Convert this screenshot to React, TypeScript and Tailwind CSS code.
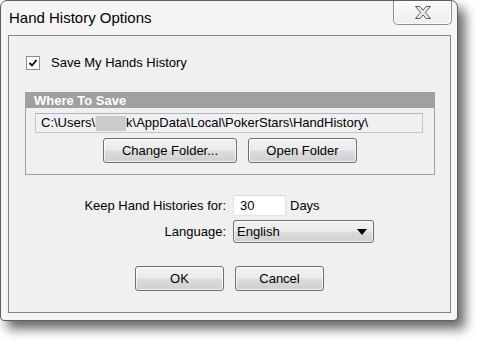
import React from "react";

const btn =
  "h-[25px] border border-[#707070] rounded-[3px] bg-[linear-gradient(#f2f2f2_0%,#ebebeb_49%,#dddddd_51%,#cfcfcf_100%)] shadow-[inset_0_0_0_1px_rgba(255,255,255,0.7)] text-[13px] text-black flex items-center justify-center";

export default function App() {
  return (
    <div
      className="w-[482px] h-[345px] bg-white"
      style={{ fontFamily: '"Liberation Sans", Arial, sans-serif' }}
    >
      <div className="w-[458px] h-[321px] bg-[#f5f5f5] border border-[#5e5e5e] rounded-t-[7px] rounded-b-[4px] shadow-[7px_8px_12px_rgba(0,0,0,0.6)] flex flex-col">
        {/* Title bar */}
        <div className="h-[34px] flex items-start justify-between pl-[8px] pr-[5px]">
          <span className="mt-[8px] text-[15px] leading-[18px] text-black">
            Hand History Options
          </span>
          <div className="w-[59px] h-[24px] border border-t-0 border-[#8e8e8e] rounded-b-[5px] bg-[linear-gradient(#fbfbfb,#eeeeee)] shadow-[inset_0_0_0_1px_rgba(255,255,255,0.9)] flex items-center justify-center">
            <svg width="18" height="15" viewBox="0 0 18 15">
              <path
                d="M1.5 1.5 H6 L9 5.2 L12 1.5 H16.5 L11.3 7.5 L16.5 13.5 H12 L9 9.8 L6 13.5 H1.5 L6.7 7.5 Z"
                fill="#eeeeee"
                stroke="#555a66"
                strokeWidth="1"
                strokeLinejoin="round"
              />
            </svg>
          </div>
        </div>

        {/* Client area */}
        <div className="ml-[7px] mr-[6px] mb-[7px] flex-1 border border-[#848484] bg-[#f0f0f0] flex flex-col text-[13px] text-black">
          {/* Checkbox row */}
          <div className="mt-[19px] ml-[17px] flex items-center">
            <div className="w-[14px] h-[14px] border border-[#8f8f8f] bg-white flex items-center justify-center">
              <svg width="10" height="10" viewBox="0 0 10 10">
                <path
                  d="M1.5 5 L4 7.5 L8.5 2"
                  fill="none"
                  stroke="#000"
                  strokeWidth="1.8"
                />
              </svg>
            </div>
            <span className="ml-[11px] leading-[16px]">Save My Hands History</span>
          </div>

          {/* Group box */}
          <div className="mt-[21px] ml-[16px] w-[410px] border border-[#a0a0a0] flex flex-col pb-[11px]">
            <div className="h-[15px] bg-[#a0a0a0] pl-[8px] text-white font-bold text-[13px] leading-[15px]">
              Where To Save
            </div>
            <div className="mt-[5px] ml-[9px] w-[388px] h-[20px] border border-[#b9c7d7] border-t-[#a9b5c4] bg-[#f0f0f0] pl-[5px] flex items-center whitespace-nowrap leading-[16px]">
              <span>C:\Users\l</span>
              <span className="inline-block w-[30px] h-[15px] bg-[#cccccc] -ml-[2px]"></span>
              <span>k\AppData\Local\PokerStars\HandHistory\</span>
            </div>
            <div className="mt-[5px] flex justify-center gap-[11px]">
              <div className={`${btn} w-[134px]`}>Change Folder...</div>
              <div className={`${btn} w-[109px]`}>Open Folder</div>
            </div>
          </div>

          {/* Keep row */}
          <div className="mt-[20px] flex items-center">
            <div className="w-[217px] text-right">Keep Hand Histories for:</div>
            <div className="ml-[7px] w-[53px] h-[21px] border border-[#e2e3ea] border-t-[#d5d8de] bg-white pl-[6px] flex items-center">
              30
            </div>
            <span className="ml-[4px]">Days</span>
          </div>

          {/* Language row */}
          <div className="mt-[4px] flex items-center">
            <div className="w-[217px] text-right">Language:</div>
            <div className="ml-[7px] w-[141px] h-[23px] border border-[#707070] rounded-[3px] bg-[linear-gradient(#f2f2f2_0%,#ebebeb_49%,#dddddd_51%,#cfcfcf_100%)] shadow-[inset_0_0_0_1px_rgba(255,255,255,0.7)] pl-[3px] pr-[6px] flex items-center justify-between">
              <span>English</span>
              <svg width="10" height="6" viewBox="0 0 10 6">
                <path d="M0 0 H10 L5 6 Z" fill="#000" />
              </svg>
            </div>
          </div>

          {/* OK / Cancel */}
          <div className="mt-[23px] flex justify-center gap-[11px]">
            <div className={`${btn} w-[89px]`}>OK</div>
            <div className={`${btn} w-[89px]`}>Cancel</div>
          </div>
        </div>
      </div>
    </div>
  );
}
